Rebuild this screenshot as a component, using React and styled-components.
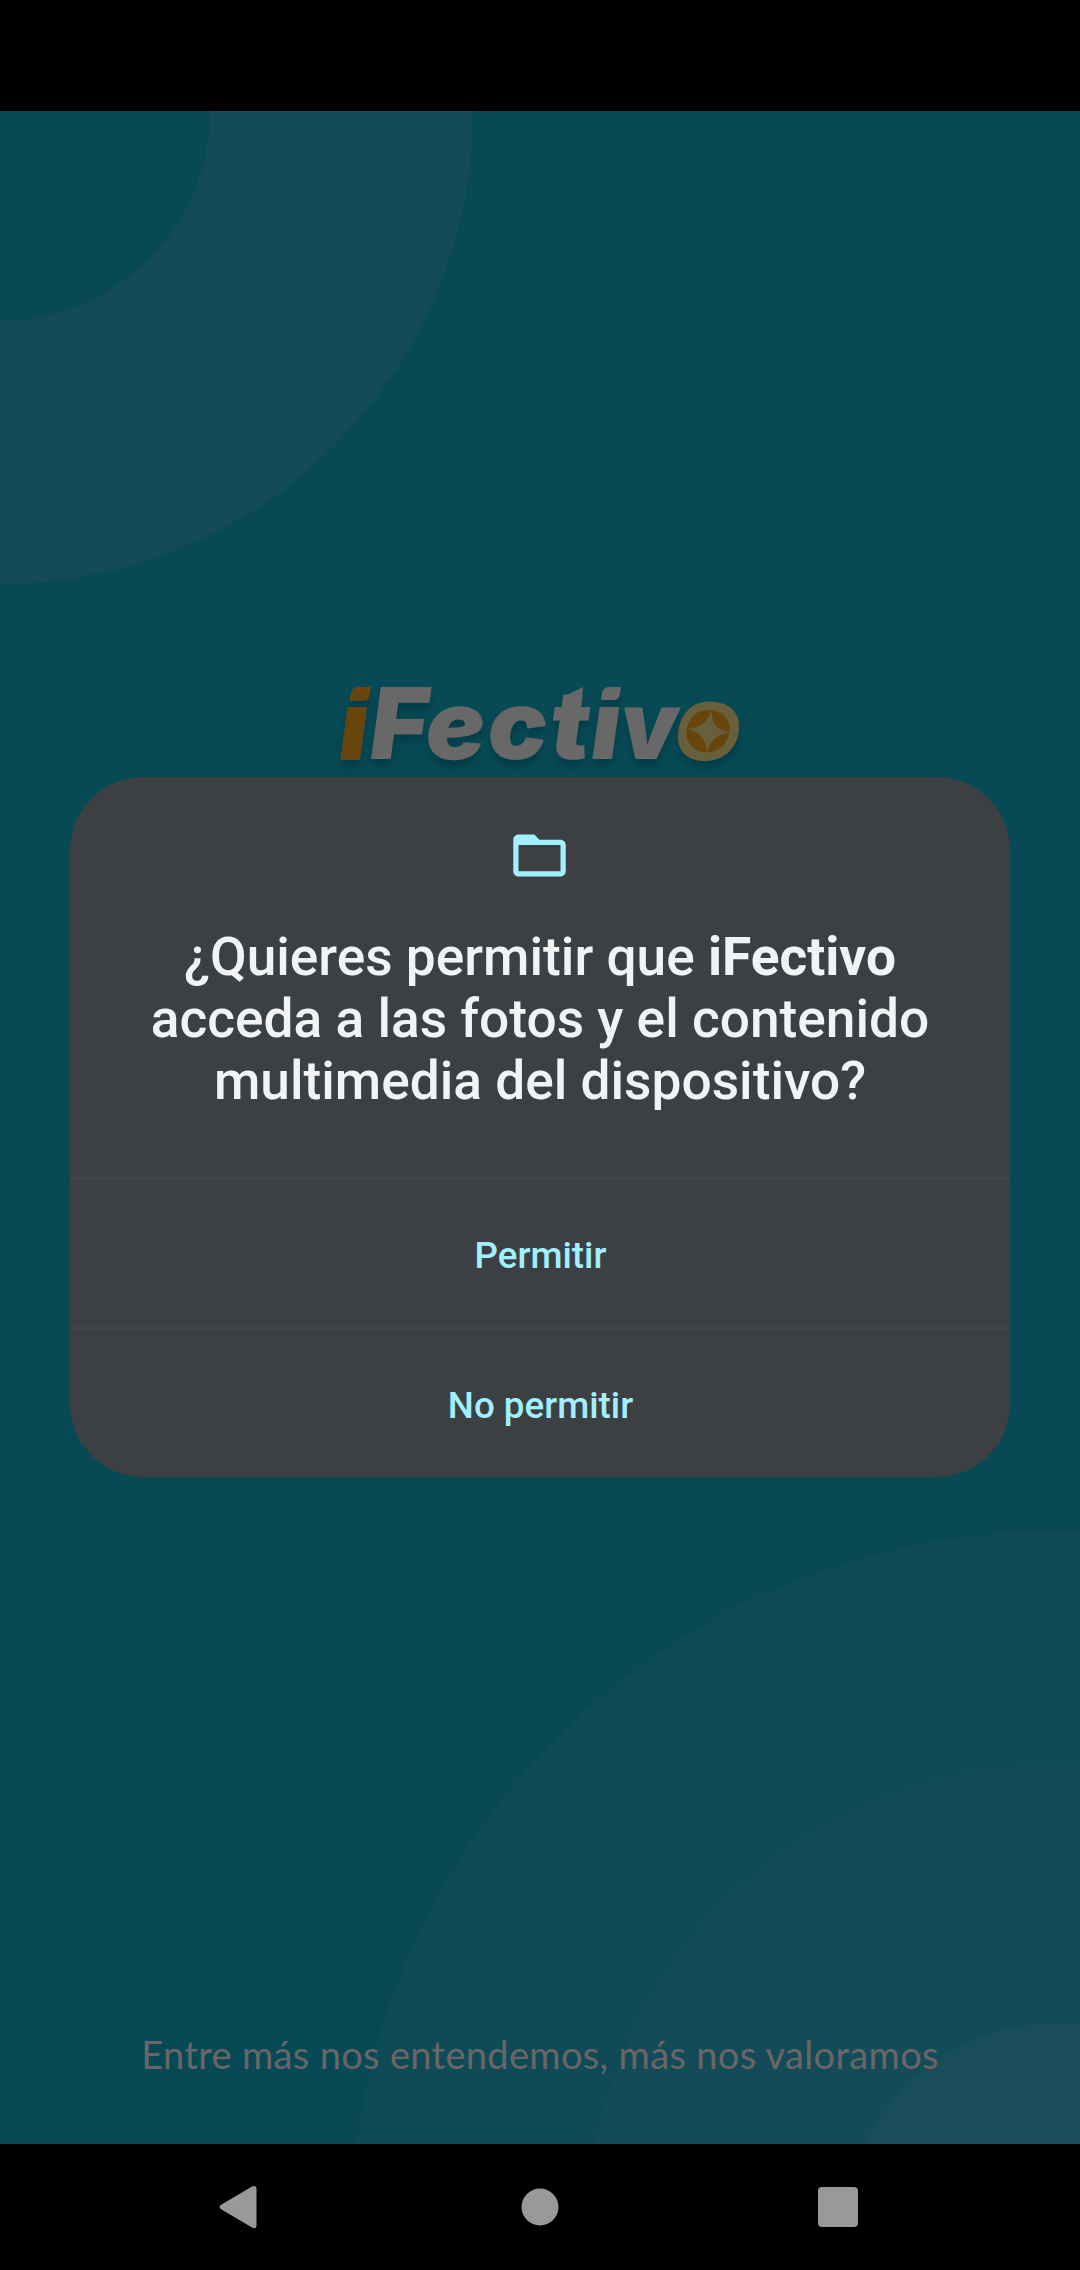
import React from "react";
import styled, { createGlobalStyle } from "styled-components";

const GlobalStyle = createGlobalStyle`
  html, body { margin: 0; padding: 0; background: #000; }
  *, *::before, *::after { box-sizing: border-box; }
`;

const Phone = styled.div`
  display: flex;
  flex-direction: column;
  width: 1080px;
  height: 2270px;
  overflow: hidden;
  background: #000;
  font-family: Roboto, "Liberation Sans", sans-serif;
`;

const StatusBar = styled.header`
  flex: none;
  height: 111px;
  background: #000;
`;

const Stage = styled.main`
  flex: none;
  display: grid;
  grid-template: 2033px / 1080px;
  background: #074a55;
  overflow: hidden;
  > * { grid-area: 1 / 1; }
`;

const Backdrop = styled.svg`
  display: block;
  width: 1080px;
  height: 2033px;
`;

const Splash = styled.section`
  display: flex;
  flex-direction: column;
  align-items: center;
  justify-content: space-between;
  padding: 559px 0 67px;
`;

const Logo = styled.svg`
  display: block;
  width: 440px;
  height: 120px;
  overflow: visible;
`;

const LogoText = styled.text`
  font-family: Inter, "Liberation Sans", sans-serif;
  font-size: 99px;
  font-weight: 900;
  font-style: italic;
  fill: ${(p) => p.$color};
`;

const Tagline = styled.p`
  margin: 0;
  font-family: Lato, "Open Sans", sans-serif;
  font-size: 38px;
  line-height: 46px;
  letter-spacing: 0.33px;
  color: #6a6668;
  white-space: nowrap;
`;

const DialogLayer = styled.div`
  display: flex;
  align-items: flex-start;
  justify-content: center;
  padding-top: 666px;
`;

const Dialog = styled.section`
  display: flex;
  flex-direction: column;
  width: 940px;
  height: 700px;
  border-radius: 73.5px;
  background: #3c4043;
  overflow: hidden;
`;

const DialogHead = styled.div`
  flex: 1;
  display: flex;
  flex-direction: column;
  align-items: center;
  padding-top: 47px;
`;

const FolderIcon = styled.svg`
  display: block;
  width: 63px;
  height: 63px;
  margin-right: 1px;
  fill: #a1efff;
`;

const Title = styled.h1`
  margin: 39px 0 0;
  font-size: 53.25px;
  line-height: 62px;
  font-weight: 500;
  text-align: center;
  white-space: nowrap;
  color: #f1f3f4;
  strong { font-weight: 700; }
`;

const Action = styled.button`
  flex: none;
  height: 150px;
  padding: 4px 0 0 1px;
  border: 0;
  border-top: 3px solid #434649;
  background: transparent;
  color: #a1efff;
  font: 500 36.75px/43px Roboto, "Liberation Sans", sans-serif;
  text-align: center;
`;

const NavBar = styled.nav`
  flex: none;
  display: flex;
  justify-content: center;
  gap: 172px;
  height: 126px;
  background: #000;
`;

const NavButton = styled.svg`
  display: block;
  width: 126px;
  height: 126px;
  fill: #999;
`;

const ORANGE = "#68450f";
const GREY = "#676767";
const GOLD = "#675f3d";

export default function App() {
  return (
    <>
      <GlobalStyle />
      <Phone>
        <StatusBar />
        <Stage>
          <Backdrop viewBox="0 0 1080 2033" aria-hidden="true">
            <circle cx="0" cy="0" r="341.5" fill="none" stroke="#134c58" strokeWidth="263" />
            <circle cx="1056.5" cy="2125.5" r="706" fill="#0f4b56" />
            <circle cx="1056.5" cy="2125.5" r="470.5" fill="#134c58" />
            <circle cx="1056.5" cy="2125.5" r="213.5" fill="#184d59" />
          </Backdrop>
          <Splash>
            <Logo viewBox="0 0 440 120">
              <defs>
                <filter id="soft" x="-10%" y="-20%" width="120%" height="160%">
                  <feDropShadow dx="0" dy="7" stdDeviation="4" floodColor="#02333d" floodOpacity="0.6" />
                </filter>
                <clipPath id="stems">
                  <path d="M0 37H51V0H272V37H440V120H0z" />
                </clipPath>
              </defs>
              <g filter="url(#soft)">
                <g clipPath="url(#stems)">
                  <g transform="translate(0 89) skewX(1.8)">
                    <LogoText $color={ORANGE} x="20" y="0.500">i</LogoText>
                    <LogoText $color={GREY} x="51" y="-0.500">F</LogoText>
                    <LogoText $color={GREY} x="106.500 168.500 231 272" y="0" transform="scale(1 0.965)">ecti</LogoText>
                    <LogoText $color={GREY} x="0" y="0" transform="translate(301.300 -0.500) scale(0.920 0.955)">v</LogoText>
                  </g>
                </g>
                <path fill={GREY} d="M243 27 263 17l-2.300 22h-19z" />
                <path fill={ORANGE} d="M37.500 17H51l-1.600 8.600q-.7 5.200-6 5.200H29.600l1.200-6.800Q32 17 37.500 17z" />
                <path fill={GREY} d="M289 17h12l-1.400 8.200q-.8 4.800-6 4.800H281l1-6.500Q283.200 17 289 17z" />
                <path fill={GOLD} d="M389 31.500c18 0 30 9 30 25 0 20-14 34.500-34 34.500-17 0-27-9-27-24 0-20 12-35.500 31-35.500z" />
                <path fill={ORANGE} d="M388 40c12 0 21.500 7 21.500 18 0 14-9.500 24.300-22.500 24.300-12 0-20.300-7-20.300-19 0-13 8.300-23.300 21.300-23.300z" />
                <path fill={GOLD} d="M391.300 40.500c1.500 14 4 18 18 22-13 2.500-18.500 7-22.300 19.700-1.500-13-5-18-19.500-23.400 13-1 18.800-5.300 23.800-18.300z" />
              </g>
            </Logo>
            <Tagline>Entre más nos entendemos, más nos valoramos</Tagline>
          </Splash>
          <DialogLayer>
            <Dialog role="dialog">
              <DialogHead>
                <FolderIcon viewBox="0 0 24 24">
                  <path d="M20 6h-8l-2-2H4c-1.100 0-1.990.9-1.990 2L2 18c0 1.100.9 2 2 2h16c1.100 0 2-.9 2-2V8c0-1.100-.9-2-2-2zm0 12H4V8h16v10z" />
                </FolderIcon>
                <Title>
                  ¿Quieres permitir que <strong>iFectivo</strong>
                  <br />
                  acceda a las fotos y el contenido
                  <br />
                  multimedia del dispositivo?
                </Title>
              </DialogHead>
              <Action>Permitir</Action>
              <Action>No permitir</Action>
            </Dialog>
          </DialogLayer>
        </Stage>
        <NavBar>
          <NavButton viewBox="0 0 126 126">
            <path d="M42.500 60.500 73 42.600q4.500-2 4.500 2v36.800q0 4-4.500 2L42.500 65.500q-4-2.500 0-5z" />
          </NavButton>
          <NavButton viewBox="0 0 126 126">
            <circle cx="63" cy="63" r="18.500" />
          </NavButton>
          <NavButton viewBox="0 0 126 126">
            <rect x="43" y="43" width="40" height="40" rx="4" />
          </NavButton>
        </NavBar>
      </Phone>
    </>
  );
}
